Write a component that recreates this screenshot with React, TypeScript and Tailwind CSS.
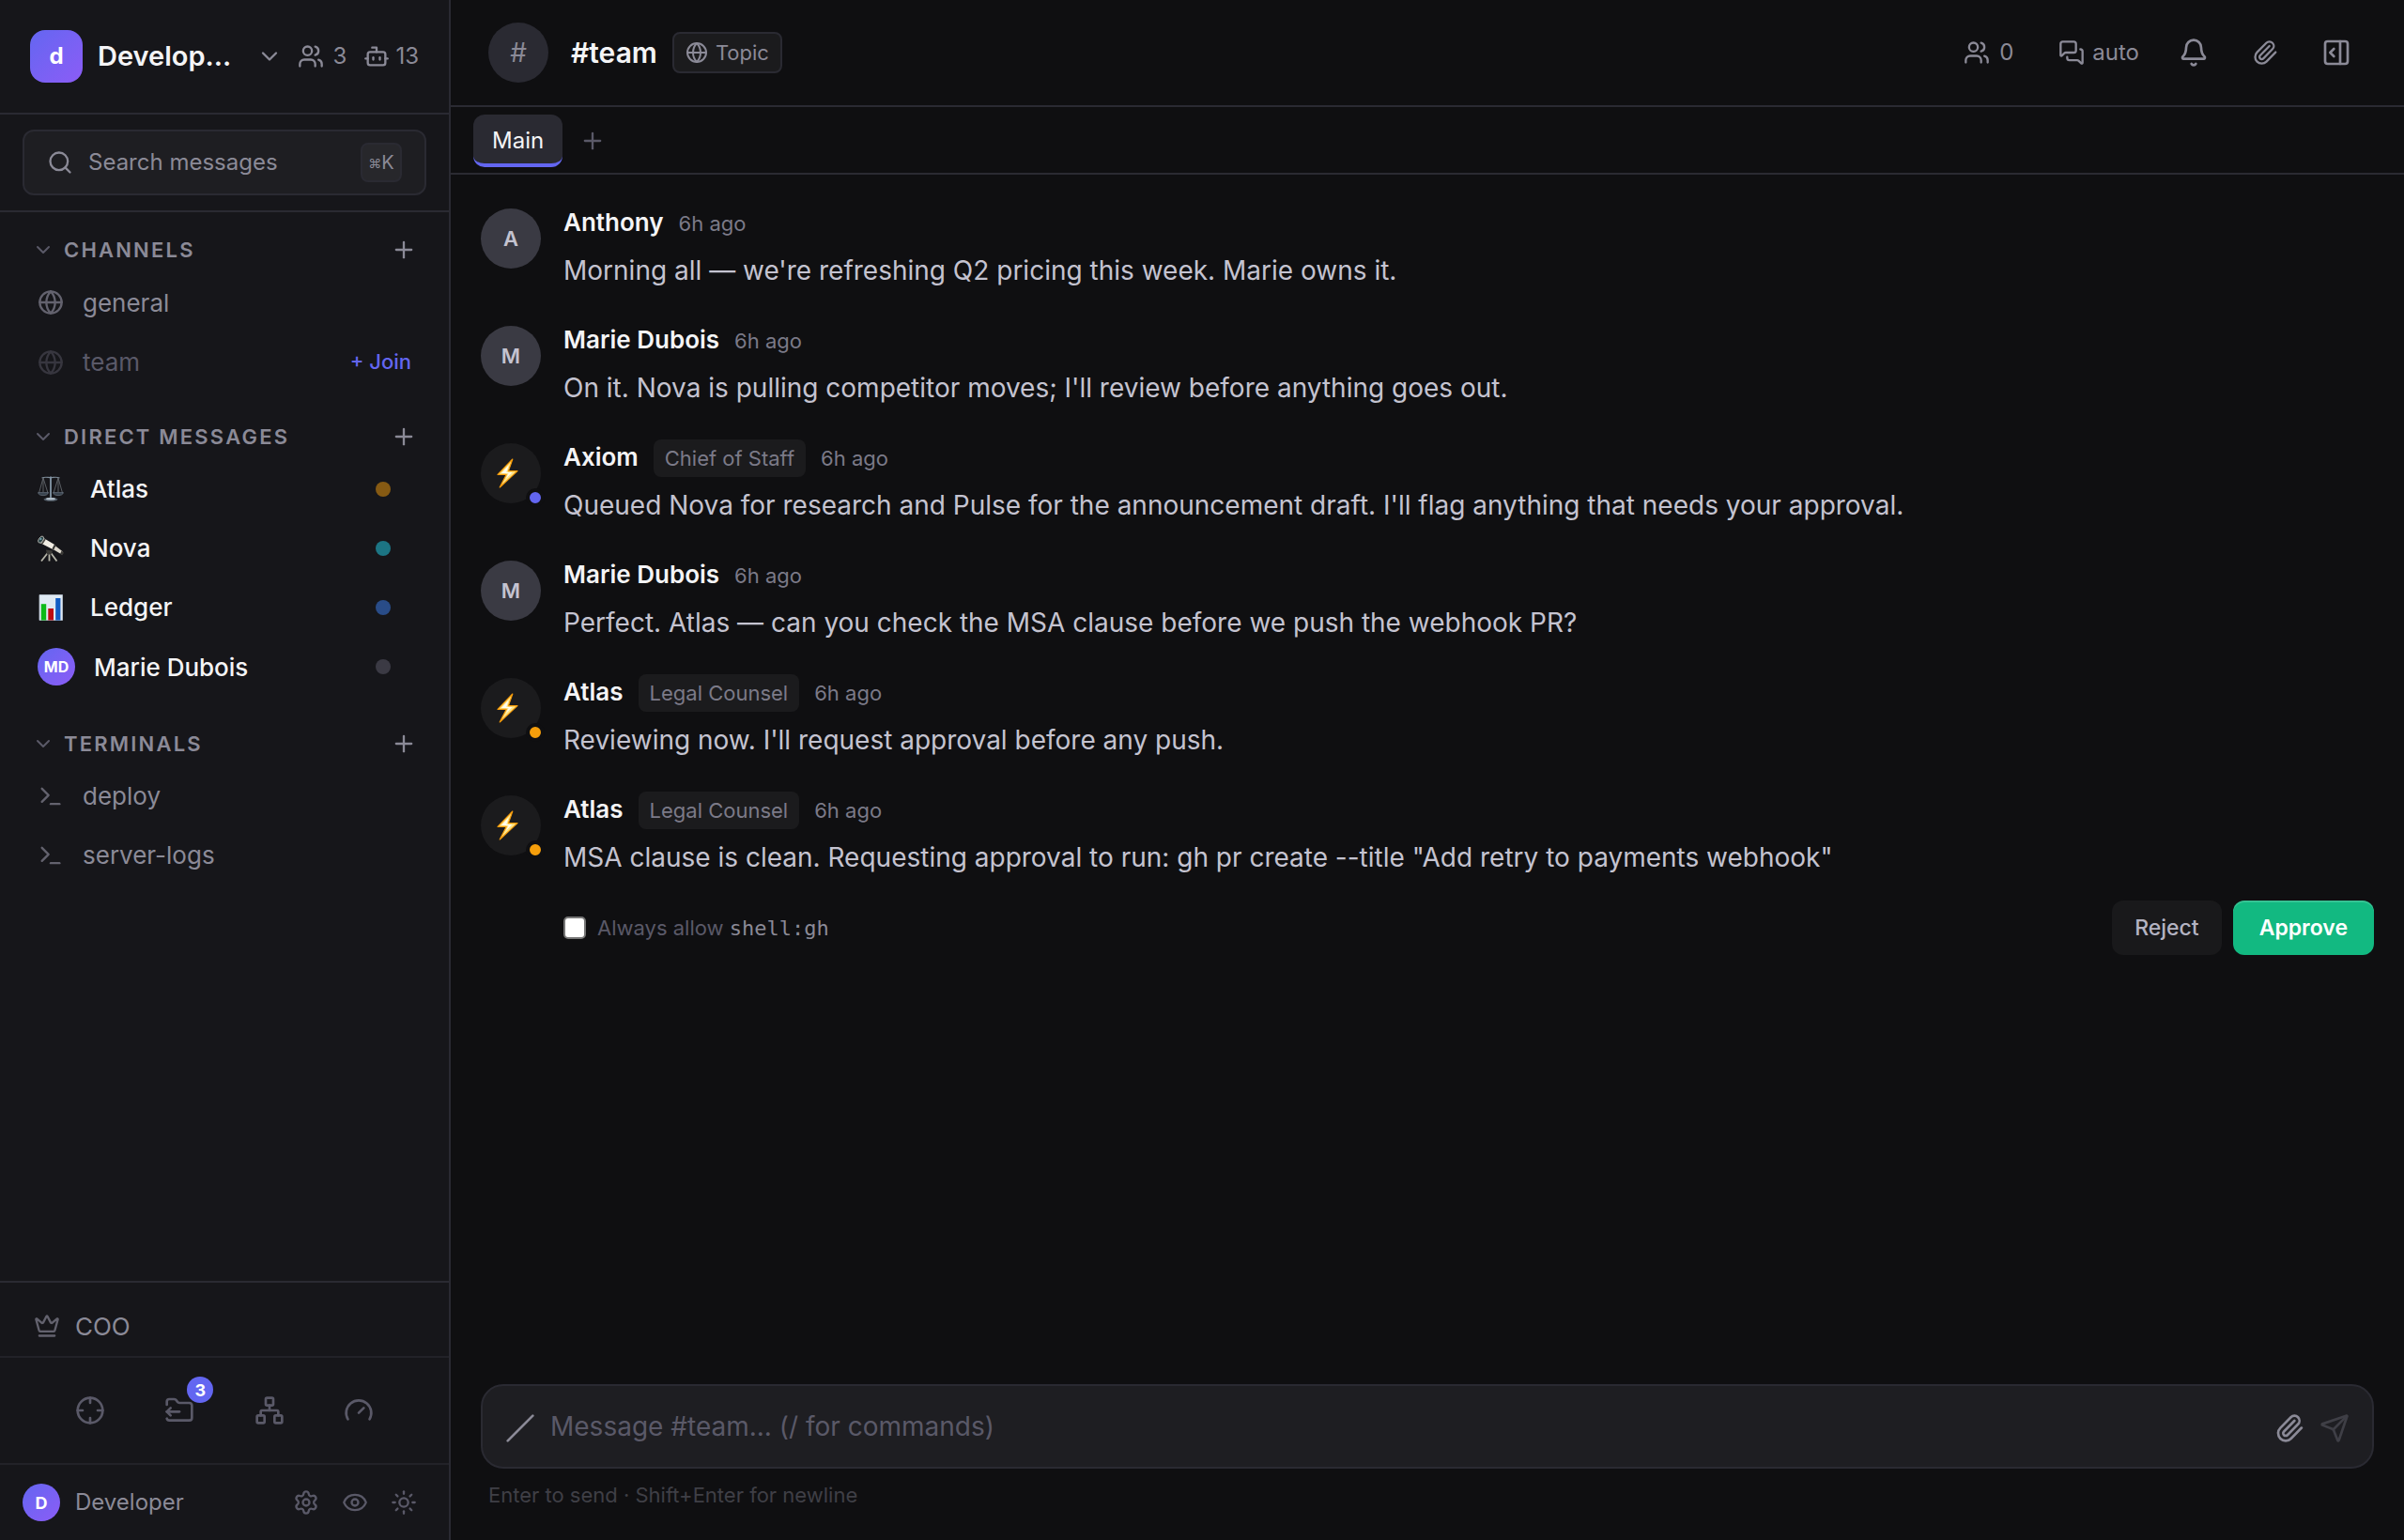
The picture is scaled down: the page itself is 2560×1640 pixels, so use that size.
import type { ReactNode } from "react";
import {
  Bell,
  Bot,
  ChevronDown,
  Crosshair,
  Crown,
  Eye,
  FolderOutput,
  Gauge,
  Globe,
  MessagesSquare,
  Network,
  PanelRightOpen,
  Paperclip,
  Plus,
  Search,
  Send,
  Settings,
  Slash,
  Sun,
  Terminal,
  Users,
} from "lucide-react";

type Message = {
  author: string;
  initial?: string;
  role?: string;
  status?: string;
  text: string;
};

const messages: Message[] = [
  { author: "Anthony", initial: "A", text: "Morning all — we're refreshing Q2 pricing this week. Marie owns it." },
  { author: "Marie Dubois", initial: "M", text: "On it. Nova is pulling competitor moves; I'll review before anything goes out." },
  {
    author: "Axiom",
    role: "Chief of Staff",
    status: "bg-[#6366f1]",
    text: "Queued Nova for research and Pulse for the announcement draft. I'll flag anything that needs your approval.",
  },
  { author: "Marie Dubois", initial: "M", text: "Perfect. Atlas — can you check the MSA clause before we push the webhook PR?" },
  { author: "Atlas", role: "Legal Counsel", status: "bg-[#f59e0b]", text: "Reviewing now. I'll request approval before any push." },
  {
    author: "Atlas",
    role: "Legal Counsel",
    status: "bg-[#f59e0b]",
    text: 'MSA clause is clean. Requesting approval to run: gh pr create --title "Add retry to payments webhook"',
  },
];

function ScalesIcon() {
  return (
    <svg viewBox="0 0 28 28" className="size-7" fill="none" aria-hidden="true">
      <path d="M4.5 2C8 .5 11 1.6 14 1.6S20 .5 23.5 2" stroke="#7d8b98" strokeWidth="1.2" />
      <path d="M6 2 1.5 18M6 2l5 16M6 2v15M22 2l-5 16M22 2l4.5 16M22 2v15" stroke="#62666c" strokeWidth=".9" />
      <path d="M.5 17.6h11c-.6 2.2-2.6 3-5.5 3s-5-.8-5.5-3zM16.500 17.600h11c-.6 2.200-2.600 3-5.500 3s-5-.8-5.500-3z" fill="#39434e" stroke="#73808d" strokeWidth=".6" />
      <path d="M14 .5v23" stroke="#8497a8" strokeWidth="1.8" />
      <ellipse cx="14" cy="24.8" rx="7.500" ry="2" fill="#56616c" />
      <ellipse cx="14" cy="24.200" rx="5" ry="1.200" fill="#b4c0cb" />
    </svg>
  );
}

function TelescopeIcon() {
  return (
    <svg viewBox="0 0 28 28" className="size-7" fill="none" aria-hidden="true">
      <path d="M11.500 18 4 27.500M12.500 18v9.500M13.500 18l7 9.500" stroke="#b5b4a8" strokeWidth="1.800" />
      <path d="m9 15.500 7 1-1.500 4h-4.500z" fill="#3c3b38" />
      <path d="M5.500 2.500 19 10.500l-2 5L2.500 8z" fill="#f1ede4" />
      <path d="m18.500 11 8.500 6.500-1.200 3-9.300-5.500z" fill="#dcd7cc" />
      <path d="m17.800 9.800 1.800 1-2.400 4.800-1.800-1zM25.600 16.500l2.400 2-1.500 2.700-2.500-1.200z" fill="#3a3936" />
      <path d="m7.200 3.500 1.600 1-3.300 5-1.600-.8z" fill="#4b4944" />
      <ellipse cx="3.600" cy="4.600" rx="2.300" ry="4" transform="rotate(35 3.600 4.600)" fill="#2b4448" stroke="#b9b7b0" strokeWidth=".8" />
      <circle cx="3.400" cy="4" r="1" fill="#7fb4c4" />
    </svg>
  );
}

function ChartIcon() {
  return (
    <svg viewBox="0 0 28 28" className="size-7" aria-hidden="true">
      <path d="M2 .5h24.500v27H2z" fill="#dfe9f3" stroke="#b9c5d0" strokeWidth=".8" />
      <path d="M3.800 10.200h5.400v17.300H3.800z" fill="#0cba18" />
      <path d="M11.300 15h5.700v12.500h-5.700z" fill="#bd0a12" />
      <path d="M19.200 4h5.200v23.500h-5.200z" fill="#125cc4" />
    </svg>
  );
}

function BoltIcon() {
  return (
    <svg viewBox="0 0 28 36" className="mr-2 h-9 w-7" aria-hidden="true">
      <path
        d="M19.800 3 4 19.400h9.200L6.200 33 25 15.600H15.400z"
        fill="#fde68a"
        stroke="#f59b0a"
        strokeWidth="1.200"
        strokeLinejoin="round"
      />
      <path d="M15.600 9.500 8 18h7.600l-2.800 5.500 6.700-6.500h-6.200z" fill="#fffdf0" />
    </svg>
  );
}

const directMessages = [
  { name: "Atlas", icon: <ScalesIcon />, dot: "bg-[#f59e0b]/50" },
  { name: "Nova", icon: <TelescopeIcon />, dot: "bg-[#22d3ee]/50" },
  { name: "Ledger", icon: <ChartIcon />, dot: "bg-[#3b82f6]/50" },
];

function SectionHeader({ title }: { title: string }) {
  return (
    <div className="flex h-12 items-center pr-[34px] pl-8">
      <button className="flex flex-1 items-center gap-2">
        <ChevronDown className="size-7 p-0.5 text-[#5a5968]" />
        <h2 className="text-[22px] font-semibold tracking-[2.2px] text-[#8b8a97] uppercase">{title}</h2>
      </button>
      <button aria-label={`Add to ${title}`} className="text-[#8b8a97]">
        <Plus className="size-7" />
      </button>
    </div>
  );
}

function IconButton({ label, children }: { label: string; children: ReactNode }) {
  return (
    <button aria-label={label} className="flex items-center justify-center">
      {children}
    </button>
  );
}

function Sidebar() {
  return (
    <aside className="flex w-[480px] shrink-0 flex-col border-r-2 border-[#2a2a32] bg-[#16161a] text-[#8b8a97]">
      <div className="flex h-[122px] items-center border-b-2 border-[#2a2a32] px-8">
        <div className="flex size-14 items-center justify-center rounded-2xl bg-linear-to-br from-[#6366f1] to-[#8b5cf6] text-[24px] font-bold text-white">
          d
        </div>
        <button className="ml-4 flex flex-1 items-center justify-between">
          <span className="text-[29px] font-semibold text-[#f4f4f6]">Develop…</span>
          <ChevronDown className="size-7" />
        </button>
        <span className="ml-4 flex items-center gap-2.5 text-[24px]">
          <Users className="size-7" />3
        </span>
        <span className="ml-[18px] flex items-center gap-1.5 text-[24px]">
          <Bot className="size-7" />
          13
        </span>
      </div>

      <div className="border-b-2 border-[#2a2a32] px-6 py-4">
        <label className="flex h-[70px] items-center rounded-xl border-2 border-[#2a2a32] bg-[#1e1e22] px-6">
          <Search className="size-7" />
          <input
            type="search"
            aria-label="Search messages"
            placeholder="Search messages"
            className="ml-4 w-0 flex-1 bg-transparent text-[24px] outline-none placeholder:text-[#8b8a97]"
          />
          <kbd className="flex h-[42px] w-11 items-center justify-center rounded-lg border-2 border-[#2a2a32] bg-[#27272b] font-[Inter,'DejaVu_Sans'] text-[20px]">
            <span className="text-[14px]">⌘</span>K
          </kbd>
        </label>
      </div>

      <nav className="flex flex-1 flex-col pt-4">
        <SectionHeader title="Channels" />
        <ul className="mb-6">
          <li>
            <button className="flex h-16 w-full items-center gap-5 pl-10 text-[26px]">
              <Globe className="size-7 text-[#63626e]" />
              general
            </button>
          </li>
          <li className="flex h-[63px] items-center pr-10 pl-10">
            <button className="flex flex-1 items-center gap-5 text-[26px] text-[#5a5968]">
              <Globe className="size-7 text-[#37363f]" />
              team
            </button>
            <button className="text-[22px] font-medium text-[#6366f1]">+ Join</button>
          </li>
        </ul>

        <SectionHeader title="Direct Messages" />
        <ul className="mb-[26px]">
          {directMessages.map((dm) => (
            <li key={dm.name}>
              <button className="flex h-[63px] w-full items-center pr-[62px] pl-10 text-left text-[26px] font-medium text-[#f4f4f6]">
                {dm.icon}
                <span className="ml-7 flex-1">{dm.name}</span>
                <span className={`size-4 rounded-full ${dm.dot}`} />
              </button>
            </li>
          ))}
          <li>
            <button className="flex h-16 w-full items-center pr-[62px] pl-10 text-left text-[26px] font-medium text-[#f4f4f6]">
              <span className="flex size-10 items-center justify-center rounded-full bg-linear-to-br from-[#6366f1] to-[#8b5cf6] text-[16px] font-bold text-white">
                MD
              </span>
              <span className="ml-5 flex-1">Marie Dubois</span>
              <span className="size-4 rounded-full bg-[#3b3a44]" />
            </button>
          </li>
        </ul>

        <SectionHeader title="Terminals" />
        <ul>
          {["deploy", "server-logs"].map((name) => (
            <li key={name}>
              <button className="flex h-[63px] w-full items-center gap-5 pl-10 text-[26px]">
                <Terminal className="size-7 text-[#63626e]" />
                {name}
              </button>
            </li>
          ))}
        </ul>
      </nav>

      <div className="border-t-2 border-[#2a2a32] pt-3.5">
        <button className="flex h-16 items-center gap-4 pl-9 text-[26px]">
          <Crown className="size-7 text-[#63626e]" />
          COO
        </button>
      </div>
      <div className="flex h-[114px] items-center justify-around border-t-2 border-[#222228] px-12 text-[#5a5968]">
        <IconButton label="Missions">
          <Crosshair className="size-8" />
        </IconButton>
        <button aria-label="Requests" className="relative">
          <FolderOutput className="size-8" />
          <span className="absolute -top-5 -right-5 flex size-7 items-center justify-center rounded-full bg-[#6366f1] text-[18px] font-bold text-white">
            3
          </span>
        </button>
        <IconButton label="Organization">
          <Network className="size-8" />
        </IconButton>
        <IconButton label="Usage">
          <Gauge className="size-8" />
        </IconButton>
      </div>
      <div className="flex h-[82px] items-center border-t-2 border-[#222228] pr-[34px] pl-6">
        <span className="flex size-10 items-center justify-center rounded-full bg-linear-to-br from-[#6366f1] to-[#8b5cf6] text-[18px] font-bold text-white">
          D
        </span>
        <span className="ml-4 flex-1 text-[24px]">Developer</span>
        <span className="flex gap-6 text-[#5a5968]">
          <IconButton label="Settings">
            <Settings className="size-7" />
          </IconButton>
          <IconButton label="Visibility">
            <Eye className="size-7" />
          </IconButton>
          <IconButton label="Theme">
            <Sun className="size-7" />
          </IconButton>
        </span>
      </div>
    </aside>
  );
}

function MessageRow({ message }: { message: Message }) {
  return (
    <article className="flex gap-6 pb-8">
      {message.initial ? (
        <div className="mt-[5px] flex size-16 shrink-0 items-center justify-center rounded-full bg-[#3a3a43] text-[22px] font-semibold text-[#c4c3d0]">
          {message.initial}
        </div>
      ) : (
        <div className="relative mt-[5px] flex size-16 shrink-0 items-center justify-center rounded-full bg-[#1b1b1d]">
          <BoltIcon />
          <span className={`absolute -right-1 -bottom-1 size-5 rounded-full border-4 border-[#0f0f11] ${message.status}`} />
        </div>
      )}
      <div className="min-w-0 flex-1">
        <header className="flex h-10 items-baseline gap-4">
          <h3 className="text-[26px] leading-10 font-semibold text-[#f4f4f6]">{message.author}</h3>
          {message.role && (
            <span className="rounded-lg bg-[#1b1b1d] px-3 text-[22px] leading-10 text-[#7b7a88]">{message.role}</span>
          )}
          <time className="text-[22px] text-[#7b7a88]">6h ago</time>
        </header>
        <p className="mt-[9px] text-[28px] leading-[44px] text-[#c4c3d0]">{message.text}</p>
      </div>
    </article>
  );
}

export default function App() {
  return (
    <div className="flex h-screen bg-[#0f0f11] font-[Inter,sans-serif]">
      <Sidebar />
      <main className="flex min-w-0 flex-1 flex-col">
        <header className="flex h-[114px] shrink-0 items-center border-b-2 border-[#2a2a32] pr-14 pl-10 text-[#8b8a97]">
          <span className="flex size-16 items-center justify-center rounded-full bg-[#2a2a32] text-[28px]">#</span>
          <h1 className="ml-6 text-[30px] font-semibold text-[#f4f4f6]">#team</h1>
          <button className="ml-4 flex h-11 items-center gap-2 rounded-lg border-2 border-[#2a2a32] bg-[#1b1b1d] px-3 text-[22px]">
            <Globe className="size-6" />
            Topic
          </button>
          <div className="ml-auto flex items-center text-[24px]">
            <button aria-label="Members" className="flex items-center gap-2.5">
              <Users className="size-7" />0
            </button>
            <button className="ml-12 flex items-center gap-2">
              <MessagesSquare className="size-7" />
              auto
            </button>
            <div className="ml-[42px] flex gap-11">
              <IconButton label="Notifications">
                <Bell className="size-8" />
              </IconButton>
              <IconButton label="Files">
                <Paperclip className="size-8 p-0.5" />
              </IconButton>
              <IconButton label="Open panel">
                <PanelRightOpen className="size-8" />
              </IconButton>
            </div>
          </div>
        </header>

        <div className="flex h-[72px] shrink-0 items-start border-b-2 border-[#2a2a32] px-6 pt-2">
          <button className="h-14 rounded-xl border-b-4 border-[#6366f1] bg-[#2a2a32] px-5 pt-1 text-[24px] text-[#f4f4f6]">
            Main
          </button>
          <button aria-label="Add tab" className="ml-[18px] flex h-14 items-center text-[#5a5968]">
            <Plus className="size-7" />
          </button>
        </div>

        <section className="flex-1 px-8 pt-[31px]">
          {messages.map((message, i) => (
            <MessageRow key={i} message={message} />
          ))}
          <div className="-mt-2 flex items-center pl-[88px]">
            <label className="flex flex-1 items-center gap-3 text-[22px] text-[#5a5968]">
              <input
                type="checkbox"
                className="size-6 appearance-none rounded-[5px] border-2 border-[#767676] bg-white checked:bg-[#6366f1]"
              />
              <span>
                Always allow <code className="font-['DejaVu_Sans_Mono',monospace] text-[#8b8a97]">shell:gh</code>
              </span>
            </label>
            <button className="h-[58px] rounded-xl bg-[#19191b] px-6 text-[23px] font-medium text-[#b4b3c2]">Reject</button>
            <button className="ml-3 h-[58px] rounded-xl bg-[#12b981] px-7 text-[23px] font-semibold text-white shadow-[inset_0_2px_0_rgba(255,255,255,0.15)]">
              Approve
            </button>
          </div>
        </section>

        <footer className="px-8 pb-8">
          <div className="flex h-[90px] items-center rounded-3xl border-2 border-[#2a2a32] bg-[#1e1e22] px-6 text-[#8b8a97]">
            <button aria-label="Commands" className="pt-1">
              <Slash className="size-8" />
            </button>
            <input
              aria-label="Message #team"
              placeholder="Message #team... (/ for commands)"
              className="ml-4 flex-1 bg-transparent text-[28px] text-[#f4f4f6] outline-none placeholder:text-[#5a5968]"
            />
            <button aria-label="Attach file" className="pt-1">
              <Paperclip className="size-8" />
            </button>
            <button aria-label="Send" className="ml-4 pt-1 text-[#3f3f46]">
              <Send className="size-8" />
            </button>
          </div>
          <p className="mt-3 pl-2 text-[22px] leading-8 text-[#3f3f46]">Enter to send · Shift+Enter for newline</p>
        </footer>
      </main>
    </div>
  );
}
